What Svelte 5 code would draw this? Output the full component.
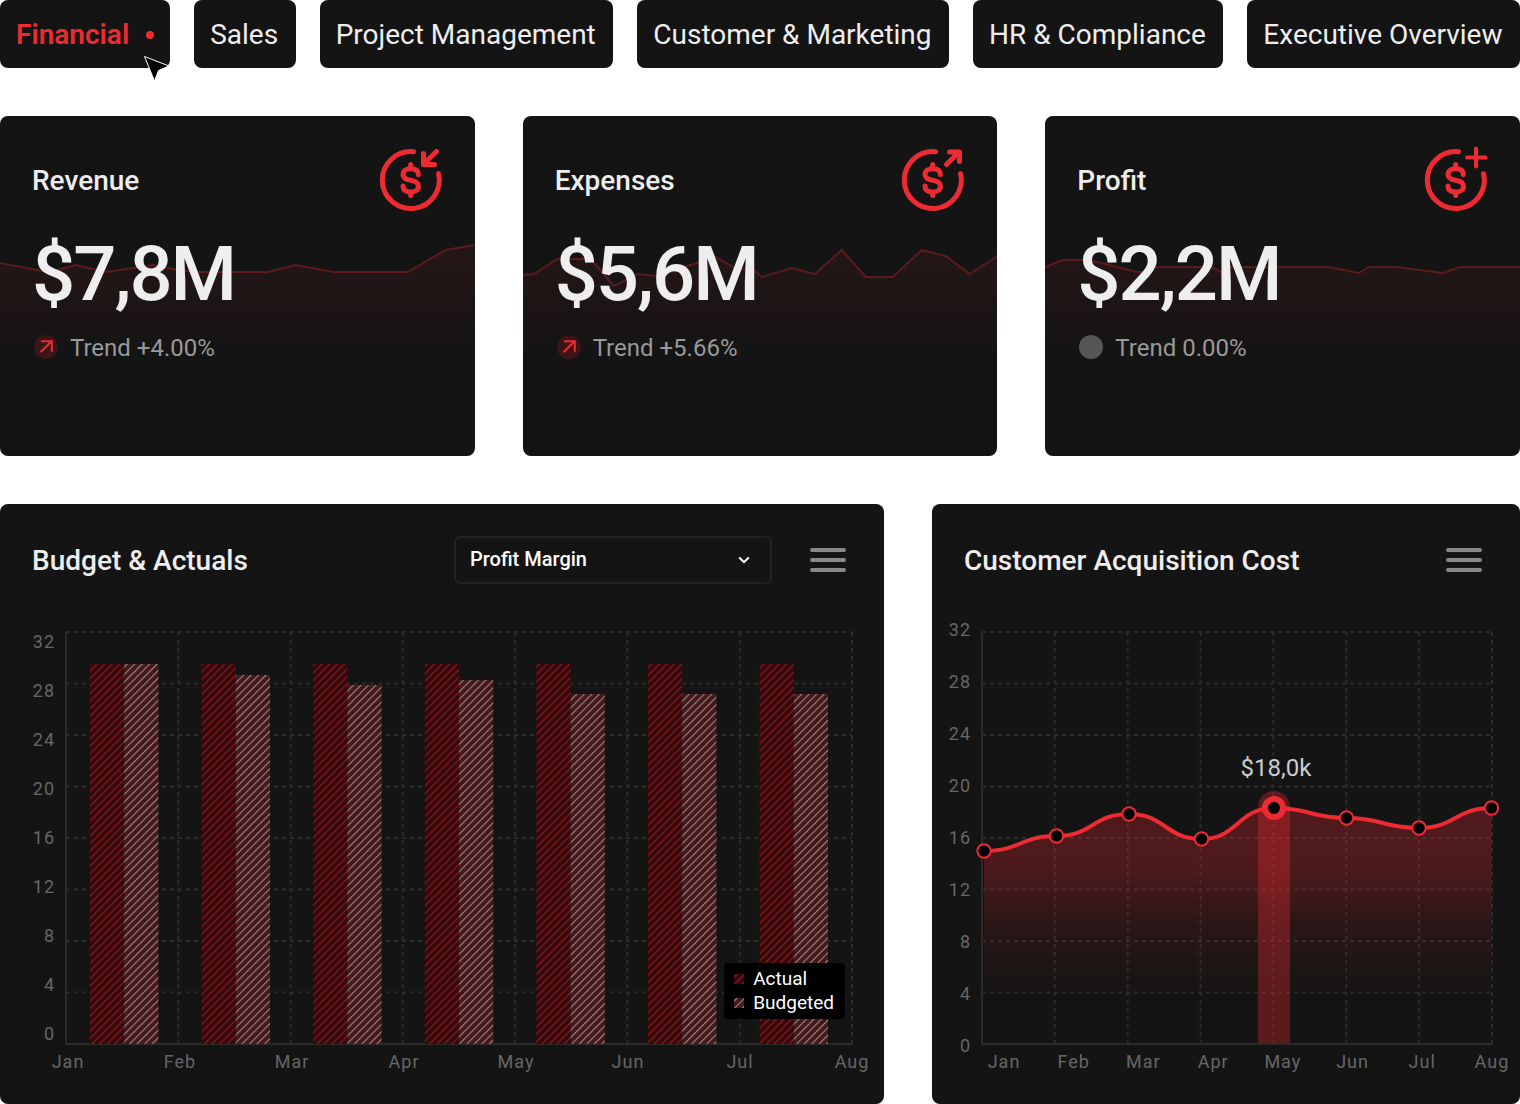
<script>
  const tabs = [
    'Financial',
    'Sales',
    'Project Management',
    'Customer & Marketing',
    'HR & Compliance',
    'Executive Overview',
  ];
  let active = $state('Financial');

  const cards = [
    {
      title: 'Revenue',
      value: '$7,8M',
      trend: 'Trend +4.00%',
      up: true,
      badge: 'M57.5 3.5 L44.5 16 M44.5 5.5 V16.5 H55.5',
      badgeWidth: 5,
      line: '0,147 43,155 58,154 76,149 106,156 133,152 153,149 173,153 195,156 268,156 296,149 334,156 408,156 446,134 475,129',
    },
    {
      title: 'Expenses',
      value: '$5,6M',
      trend: 'Trend +5.66%',
      up: true,
      badge: 'M45.5 16.5 L58 4 M48.5 4 H58.5 V13.5',
      badgeWidth: 5,
      line: '0,159 11,158 34,143 68,143 91,170 115,158 134,160 177,146 193,141 214,153 230,153 239,161 269,152 292,158 319,134 343,161 370,161 399,134 423,140 447,158 475,140',
    },
    {
      title: 'Profit',
      value: '$2,2M',
      trend: 'Trend 0.00%',
      up: false,
      badge: 'M52 0.5 V18.5 M43 9.5 H61.5',
      badgeWidth: 4,
      line: '0,151 18,144 44,144 92,156 98,156 112,151 167,151 176,156 185,151 284,151 314,157 324,151 353,151 398,157 415,151 475,151',
    },
  ];

  const months = ['Jan', 'Feb', 'Mar', 'Apr', 'May', 'Jun', 'Jul', 'Aug'];
  const ticks = [32, 28, 24, 20, 16, 12, 8, 4, 0];
  const gridRows = [0, 1, 2, 3, 4, 5, 6, 7];
  const gridCols = [1, 2, 3, 4, 5, 6, 7];

  // Bar tops, measured down from the top of the 412-unit plot
  const actualTop = 32;
  const budgetTops = [32, 43, 53, 48, 62, 62, 62];
  const barX = (i, second) => `${((24 + 111.6 * i + (second ? 34.2 : 0)) / 786) * 100}%`;
  const barWidth = `${(34.2 / 786) * 100}%`;

  // Acquisition cost points in a 510 x 412 plot
  const costY = [219, 204, 182, 207, 176, 186, 196, 176];
  const points = costY.map((y, i) => ({ x: 2 + 72.5 * i, y }));
  const curve = points
    .map((p, i) => {
      if (i === 0) return `M${p.x} ${p.y}`;
      const mid = (points[i - 1].x + p.x) / 2;
      return `C${mid} ${points[i - 1].y} ${mid} ${p.y} ${p.x} ${p.y}`;
    })
    .join(' ');
  const px = (x) => `${(x / 510) * 100}%`;
  const peak = points[4];
</script>

{#snippet gridLines()}
  {#each gridRows as r}
    <line class="grid" x1="0" x2="100%" y1="{r * 12.5}%" y2="{r * 12.5}%" />
  {/each}
  {#each gridCols as c}
    <line class="grid" x1="{(c / 7) * 100}%" x2="{(c / 7) * 100}%" y1="0" y2="100%" />
  {/each}
  <line class="axis" x1="0" x2="0" y1="0" y2="100%" />
  <line class="axis" x1="0" x2="100%" y1="100%" y2="100%" />
{/snippet}

{#snippet menuButton(label)}
  <button class="menu" type="button" aria-label={label}>
    <span></span><span></span><span></span>
  </button>
{/snippet}

<div class="page">
  <nav class="tabs" aria-label="Dashboards">
    {#each tabs as tab}
      <button type="button" class="tab" class:active={tab === active} onclick={() => (active = tab)}>
        {tab}
        {#if tab === active}<span class="dot"></span>{/if}
      </button>
    {/each}
    <svg class="cursor" width="28" height="28" viewBox="0 0 28 28" aria-hidden="true">
      <path d="M1.5 1.5 L26 11 L15.5 15.5 L11.5 26 Z" fill="#000" stroke="#fff" stroke-width="1" />
    </svg>
  </nav>

  <div class="cards">
    {#each cards as card, i}
      <section class="card">
        <svg class="spark" viewBox="0 0 475 340" preserveAspectRatio="none" aria-hidden="true">
          <defs>
            <linearGradient id="spark{i}" gradientUnits="userSpaceOnUse" x1="0" y1="130" x2="0" y2="240">
              <stop offset="0" stop-color="#ee2a32" stop-opacity="0.07" />
              <stop offset="0.25" stop-color="#ee2a32" stop-opacity="0.06" />
              <stop offset="1" stop-color="#ee2a32" stop-opacity="0" />
            </linearGradient>
          </defs>
          <polygon points="0,340 {card.line} 475,340" fill="url(#spark{i})" />
          <polyline class="spark-line" points={card.line} />
        </svg>
        <div class="card-head">
          <h2>{card.title}</h2>
          <svg class="badge" width="64" height="64" viewBox="0 0 64 64" aria-hidden="true">
            <g fill="none" stroke="#ee2a32" stroke-linecap="round" stroke-linejoin="round" stroke-width="5">
              <path d="M34.5 3.7 A28.5 28.5 0 1 0 59.6 25.8" />
              <path
                d="M39.3 26.6 C39.3 22.8 36.5 20.8 31.7 20.8 C27 20.8 24 22.8 24 26.4 C24 30.5 27.5 31.5 31.7 32.3 C36 33 39.5 34.2 39.5 38.4 C39.5 42 36 44 31.7 44 C27 44 24 42 24 38"
              />
              <path d="M31.7 16.5 V20 M31.7 44.5 V47.5" />
              <path d={card.badge} stroke-width={card.badgeWidth} />
            </g>
          </svg>
        </div>
        <p class="value">{card.value}</p>
        <p class="trend">
          <svg width="24" height="24" viewBox="0 0 24 24" aria-hidden="true">
            {#if card.up}
              <circle cx="12" cy="12" r="12" fill="#3c1518" />
              <path d="M6.5 17.2 L17.5 6.2 M7.2 6.2 H17.8 V16.8" fill="none" stroke="#ee2a32" stroke-width="2" />
            {:else}
              <circle cx="12" cy="12" r="12" fill="#555" />
            {/if}
          </svg>
          <span>{card.trend}</span>
        </p>
      </section>
    {/each}
  </div>

  <div class="charts">
    <section class="card">
      <div class="chart-head">
        <h2>Budget &amp; Actuals</h2>
        <div class="tools">
          <div class="picker">
            <select aria-label="Metric">
              <option>Profit Margin</option>
              <option>Revenue</option>
              <option>Expenses</option>
            </select>
            <svg class="chevron" width="12" height="8" viewBox="0 0 12 8" aria-hidden="true">
              <path d="M1.2 1.5 L6 6.2 L10.8 1.5" fill="none" stroke="#fff" stroke-width="2" />
            </svg>
          </div>
          {@render menuButton('Budget chart menu')}
        </div>
      </div>
      <div class="chart budget">
        <div class="y-axis">
          {#each ticks as t}<span>{t}</span>{/each}
        </div>
        <div class="plot-area">
          <svg class="plot" role="img" aria-label="Budget and actuals by month">
            <defs>
              <pattern id="hatchActual" width="5.3" height="5.3" patternUnits="userSpaceOnUse" patternTransform="rotate(45)">
                <rect width="5.3" height="5.3" fill="#33090c" />
                <rect x="2" width="0.8" height="5.3" fill="#b81f27" />
              </pattern>
              <pattern id="hatchBudget" width="5.3" height="5.3" patternUnits="userSpaceOnUse" patternTransform="rotate(45)">
                <rect width="5.3" height="5.3" fill="#43191c" />
                <rect x="2" width="0.8" height="5.3" fill="#c2aeaf" />
              </pattern>
            </defs>
            {@render gridLines()}
            {#each budgetTops as top, i}
              <rect x={barX(i, false)} y={actualTop} width={barWidth} height={412 - actualTop} fill="url(#hatchActual)" />
              <rect x={barX(i, true)} y={top} width={barWidth} height={412 - top} fill="url(#hatchBudget)" />
            {/each}
          </svg>
          <ul class="legend">
            <li>
              <svg width="10" height="10" aria-hidden="true"><rect width="10" height="10" fill="url(#hatchActual)" /></svg>
              Actual
            </li>
            <li>
              <svg width="10" height="10" aria-hidden="true"><rect width="10" height="10" fill="url(#hatchBudget)" /></svg>
              Budgeted
            </li>
          </ul>
        </div>
        <div class="x-axis">
          {#each months as m}<span>{m}</span>{/each}
        </div>
      </div>
    </section>

    <section class="card">
      <div class="chart-head">
        <h2>Customer Acquisition Cost</h2>
        {@render menuButton('Acquisition chart menu')}
      </div>
      <div class="chart cost">
        <div class="y-axis">
          {#each ticks as t}<span>{t}</span>{/each}
        </div>
        <div class="plot-area">
          <svg class="plot" role="img" aria-label="Customer acquisition cost by month">
            <defs>
              <linearGradient id="costFill" gradientUnits="userSpaceOnUse" x1="0" y1="176" x2="0" y2="412">
                <stop offset="0" stop-color="#ee2a32" stop-opacity="0.28" />
                <stop offset="0.25" stop-color="#ee2a32" stop-opacity="0.26" />
                <stop offset="0.5" stop-color="#ee2a32" stop-opacity="0.1" />
                <stop offset="0.8" stop-color="#ee2a32" stop-opacity="0" />
              </linearGradient>
            </defs>
            {@render gridLines()}
            <svg class="stretch" width="100%" height="100%" viewBox="0 0 510 412" preserveAspectRatio="none">
              <path d="{curve} V412 H{points[0].x} Z" fill="url(#costFill)" />
              <path
                d="M{peak.x - 16} 411 V{peak.y - 1} a16 16 0 0 1 32 0 V411 Z"
                fill="#ee2a32"
                fill-opacity="0.33"
              />
              <path class="curve" d={curve} />
            </svg>
            {#each points as p, i}
              {#if i === 4}
                <circle cx={px(p.x)} cy={p.y} r="9" fill="#000" stroke="#ee2a32" stroke-width="6" />
              {:else}
                <circle cx={px(p.x)} cy={p.y} r="6.7" fill="#000" stroke="#ee2a32" stroke-width="2" />
              {/if}
            {/each}
            <text class="callout" x={px(peak.x + 2)} y="144">$18,0k</text>
          </svg>
        </div>
        <div class="x-axis">
          {#each months as m}<span>{m}</span>{/each}
        </div>
      </div>
    </section>
  </div>
</div>

<style>
  :global(body) {
    margin: 0;
    background: #fff;
  }

  .page {
    display: flex;
    flex-direction: column;
    gap: 48px;
    font-family: Roboto, 'Liberation Sans', sans-serif;
    color: #eee;
  }

  h2,
  p,
  ul {
    margin: 0;
    padding: 0;
  }

  button,
  select {
    font-family: inherit;
    border: 0;
    cursor: pointer;
  }

  .tabs {
    position: relative;
    display: flex;
    gap: 24px;
  }

  .tab {
    display: flex;
    flex: 1 0 auto;
    align-items: center;
    gap: 17px;
    height: 68px;
    padding: 2px 16px 0;
    border-radius: 8px;
    background: #141414;
    color: #eee;
    font-size: 28px;
    line-height: 32px;
    white-space: nowrap;
  }

  .tab.active {
    flex-grow: 0;
    color: #ee2a32;
    font-weight: 600;
  }

  .dot {
    width: 8px;
    height: 8px;
    border-radius: 50%;
    background: #ee2a32;
  }

  .cursor {
    position: absolute;
    left: 143px;
    top: 55px;
  }

  .cards {
    display: grid;
    grid-template-columns: repeat(3, 1fr);
    gap: 48px;
  }

  .card {
    position: relative;
    padding: 32px;
    border-radius: 8px;
    background: #141414;
    overflow: hidden;
  }

  .cards .card {
    min-height: 276px;
  }

  h2 {
    padding-top: 2px;
    font-size: 28px;
    font-weight: 500;
    line-height: 32px;
    white-space: nowrap;
  }

  .spark {
    position: absolute;
    inset: 0;
    width: 100%;
    height: 100%;
  }

  .spark-line {
    fill: none;
    stroke: #ee2a32;
    stroke-opacity: 0.3;
    stroke-width: 2;
    vector-effect: non-scaling-stroke;
  }

  .card-head,
  .value,
  .trend {
    position: relative;
  }

  .card-head,
  .chart-head {
    display: flex;
    align-items: center;
    justify-content: space-between;
  }

  .badge {
    overflow: visible;
  }

  .value {
    margin-top: 16px;
    font-size: 76px;
    font-weight: 500;
    line-height: 92px;
    letter-spacing: -2px;
  }

  .trend {
    display: flex;
    align-items: center;
    gap: 12px;
    margin-top: 11px;
    padding-left: 2px;
    color: #999;
    font-size: 24px;
    line-height: 30px;
  }

  .trend span {
    padding-top: 2px;
  }

  .charts {
    display: grid;
    grid-template-columns: 221fr 147fr;
    gap: 48px;
  }

  .charts .card {
    padding: 32px 0;
  }

  .chart-head {
    height: 48px;
    padding: 0 32px;
  }

  .tools {
    display: flex;
    align-items: center;
    gap: 32px;
  }

  .picker {
    position: relative;
    width: 318px;
  }

  select {
    display: block;
    width: 100%;
    height: 48px;
    padding: 0 48px 2px 14px;
    border: 2px solid #222;
    border-radius: 6px;
    background: #141414;
    color: #fff;
    font-size: 20px;
    font-weight: 500;
    appearance: none;
  }

  .chevron {
    position: absolute;
    right: 22px;
    top: 20px;
    pointer-events: none;
  }

  .menu {
    display: flex;
    flex-direction: column;
    align-items: center;
    justify-content: center;
    gap: 6px;
    width: 48px;
    height: 48px;
    padding: 0;
    background: none;
  }

  .menu span {
    width: 36px;
    height: 4px;
    border-radius: 2px;
    background: #888;
  }

  .chart {
    display: grid;
    row-gap: 8px;
    margin-top: 48px;
    color: #666;
    font-size: 18px;
    line-height: 20px;
    letter-spacing: 1px;
  }

  .budget {
    grid-template-columns: 66px 1fr;
    padding-right: 32px;
  }

  .cost {
    grid-template-columns: 50px 1fr;
    padding-right: 28px;
  }

  .y-axis {
    display: flex;
    flex-direction: column;
    justify-content: space-between;
    padding-right: 11px;
    text-align: right;
  }

  .cost .y-axis {
    margin: -12px 0;
  }

  .plot-area {
    position: relative;
    height: 412px;
  }

  .plot {
    display: block;
    width: 100%;
    height: 100%;
    overflow: visible;
  }

  .stretch {
    overflow: visible;
  }

  .grid,
  .axis {
    stroke: #2b2b2b;
    stroke-width: 2;
  }

  .grid {
    stroke-dasharray: 4 4;
  }

  .curve {
    fill: none;
    stroke: #ee2a32;
    stroke-width: 4;
    vector-effect: non-scaling-stroke;
  }

  .callout {
    fill: #ccc;
    font-size: 24px;
    letter-spacing: 0;
    text-anchor: middle;
  }

  .x-axis {
    display: flex;
    grid-column: 2;
    justify-content: space-between;
    padding-left: 2px;
  }

  .cost .x-axis {
    padding-left: 22px;
  }

  .x-axis span {
    display: flex;
    justify-content: center;
    width: 0;
  }

  .legend {
    position: absolute;
    right: 7px;
    bottom: 25px;
    padding: 4px 11px 4px 10px;
    border-radius: 4px;
    background: #000;
    color: #fff;
    font-size: 19px;
    line-height: 24px;
    letter-spacing: 0;
    list-style: none;
  }

  .legend li {
    display: flex;
    align-items: center;
    gap: 9px;
  }
</style>
